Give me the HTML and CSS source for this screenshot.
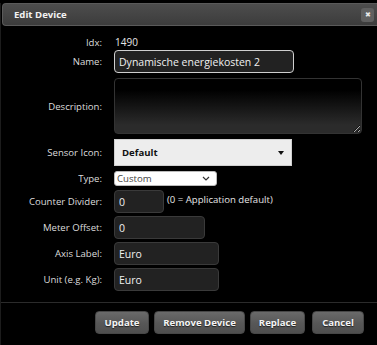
FILE: index.html
```html
<!DOCTYPE html>
<html>
<head>
<meta charset="utf-8">
<link rel="stylesheet" href="styles.css">
</head>
<body>
<div class="dialog">
  <div class="titlebar">
    <span class="title">Edit Device</span>
    <span class="close">&#x2716;</span>
  </div>
  <div class="form">
    <div class="row r-idx"><span class="label">Idx:</span><span class="value">1490</span></div>
    <div class="row r-name"><span class="label">Name:</span><input class="input name" type="text" value="Dynamische energiekosten 2"></div>
    <div class="row r-desc"><span class="label">Description:</span><textarea class="desc"></textarea></div>
    <div class="row r-sensor"><span class="label">Sensor Icon:</span><div class="sensor"><span>Default</span><span class="caret"></span></div></div>
    <div class="row r-type"><span class="label">Type:</span><div class="type"><span>Custom</span><svg class="chev" width="8" height="5" viewBox="0 0 8 5"><path d="M1 1 L4 4 L7 1" fill="none" stroke="#333" stroke-width="1.2"/></svg></div></div>
    <div class="row r-counter"><span class="label">Counter Divider:</span><input class="input counter" type="text" value="0"><span class="hint">(0 = Application default)</span></div>
    <div class="row r-meter"><span class="label">Meter Offset:</span><input class="input meter" type="text" value="0"></div>
    <div class="row r-axis"><span class="label">Axis Label:</span><input class="input axis" type="text" value="Euro"></div>
    <div class="row r-unit"><span class="label">Unit (e.g. Kg):</span><input class="input axis" type="text" value="Euro"></div>
  </div>
  <div class="footer">
    <button class="btn w-update">Update</button>
    <button class="btn w-remove">Remove Device</button>
    <button class="btn w-replace">Replace</button>
    <button class="btn w-cancel">Cancel</button>
  </div>
</div>
</body>
</html>
```
FILE: styles.css
```css
html, body {
  margin: 0;
  padding: 0;
  background: #000;
}
body {
  width: 377px;
  height: 345px;
  overflow: hidden;
  font-family: "Open Sans", "Noto Sans", sans-serif;
  font-size: 9.6px;
  color: #e6e6e6;
}
.dialog {
  height: 344px;
  border-left: 1px solid #1c1c1c;
  border-bottom: 1px solid #2a2a2a;
  box-sizing: border-box;
}
.titlebar {
  margin: 3px 0 0 1px;
  height: 23px;
  box-sizing: border-box;
  border: 1px solid #5a5a5a;
  border-right: none;
  border-radius: 4px 0 0 4px;
  background: linear-gradient(#4d4d4d, #3c3c3c);
  display: flex;
  align-items: center;
  justify-content: space-between;
  padding: 0 3px 0 11px;
}
.title {
  font-weight: bold;
  font-size: 9.6px;
  color: #f2f2f2;
}
.close {
  width: 13px;
  height: 14px;
  background: #606060;
  border-radius: 3px;
  color: #e8e8e8;
  font-size: 7px;
  display: flex;
  align-items: center;
  justify-content: center;
}
.form {
  padding-top: 9px;
}
.row {
  display: flex;
  align-items: center;
  margin-top: 3px;
}
.label {
  width: 101px;
  text-align: right;
  margin-right: 12px;
  flex: none;
  color: #dcdcdc;
}
.r-idx { margin-top: 0; height: 14px; }
.r-name { margin-top: 1px; }
.r-desc, .r-sensor, .r-type { margin-top: 5px; }
.r-counter { margin-top: 4px; }
.value { padding-left: 1px; font-size: 10px; }
.input {
  box-sizing: border-box;
  height: 23px;
  background: #222;
  border: 1px solid #3a3a3a;
  border-radius: 4px;
  color: #f0f0f0;
  font-family: inherit;
  font-size: 10.5px;
  padding: 0 4px;
  outline: none;
}
.name {
  width: 180px;
  border-color: #cfcfcf;
}
.counter { width: 50px; }
.meter { width: 91px; }
.axis { width: 105px; }
.hint { margin-left: 3px; margin-top: -5px; }
.desc {
  box-sizing: border-box;
  width: 248px;
  height: 56px;
  background: linear-gradient(#000 20%, #2b2b2b 85%);
  border: 1px solid #333;
  border-radius: 4px;
  color: #eee;
  resize: both;
  outline: none;
}
.sensor {
  box-sizing: border-box;
  width: 178px;
  height: 27px;
  background: #ededed;
  border: 1px solid #d0d0d0;
  color: #111;
  font-weight: bold;
  font-size: 9.6px;
  display: flex;
  align-items: center;
  justify-content: space-between;
  padding: 0 7px 0 7px;
}
.caret {
  width: 0;
  height: 0;
  border-left: 3.5px solid transparent;
  border-right: 3.5px solid transparent;
  border-top: 4px solid #111;
}
.type {
  box-sizing: border-box;
  width: 103px;
  height: 15px;
  background: #fff;
  border: 1px solid #bbb;
  border-radius: 3px;
  color: #444;
  font-size: 9.6px;
  display: flex;
  align-items: center;
  justify-content: space-between;
  padding: 0 6px 0 2px;
}
.footer {
  margin-top: 11px;
  border-top: 1px solid #2b2b2b;
  display: flex;
  justify-content: flex-end;
  gap: 5px;
  padding: 8px 13px 0 0;
}
.btn {
  height: 23px;
  box-sizing: border-box;
  border: 1px solid #474747;
  border-radius: 4px;
  background: linear-gradient(#6a6a6a, #575757 55%, #4f4f4f);
  color: #f4f4f4;
  font-family: "Open Sans", "Noto Sans", sans-serif;
  font-weight: bold;
  font-size: 9.6px;
  text-shadow: 0 1px 1px #222;
  padding: 0;
}
.w-update { width: 54px; }
.w-remove { width: 91px; }
.w-replace { width: 55px; }
.w-cancel { width: 52px; margin-left: 2px; }
```
